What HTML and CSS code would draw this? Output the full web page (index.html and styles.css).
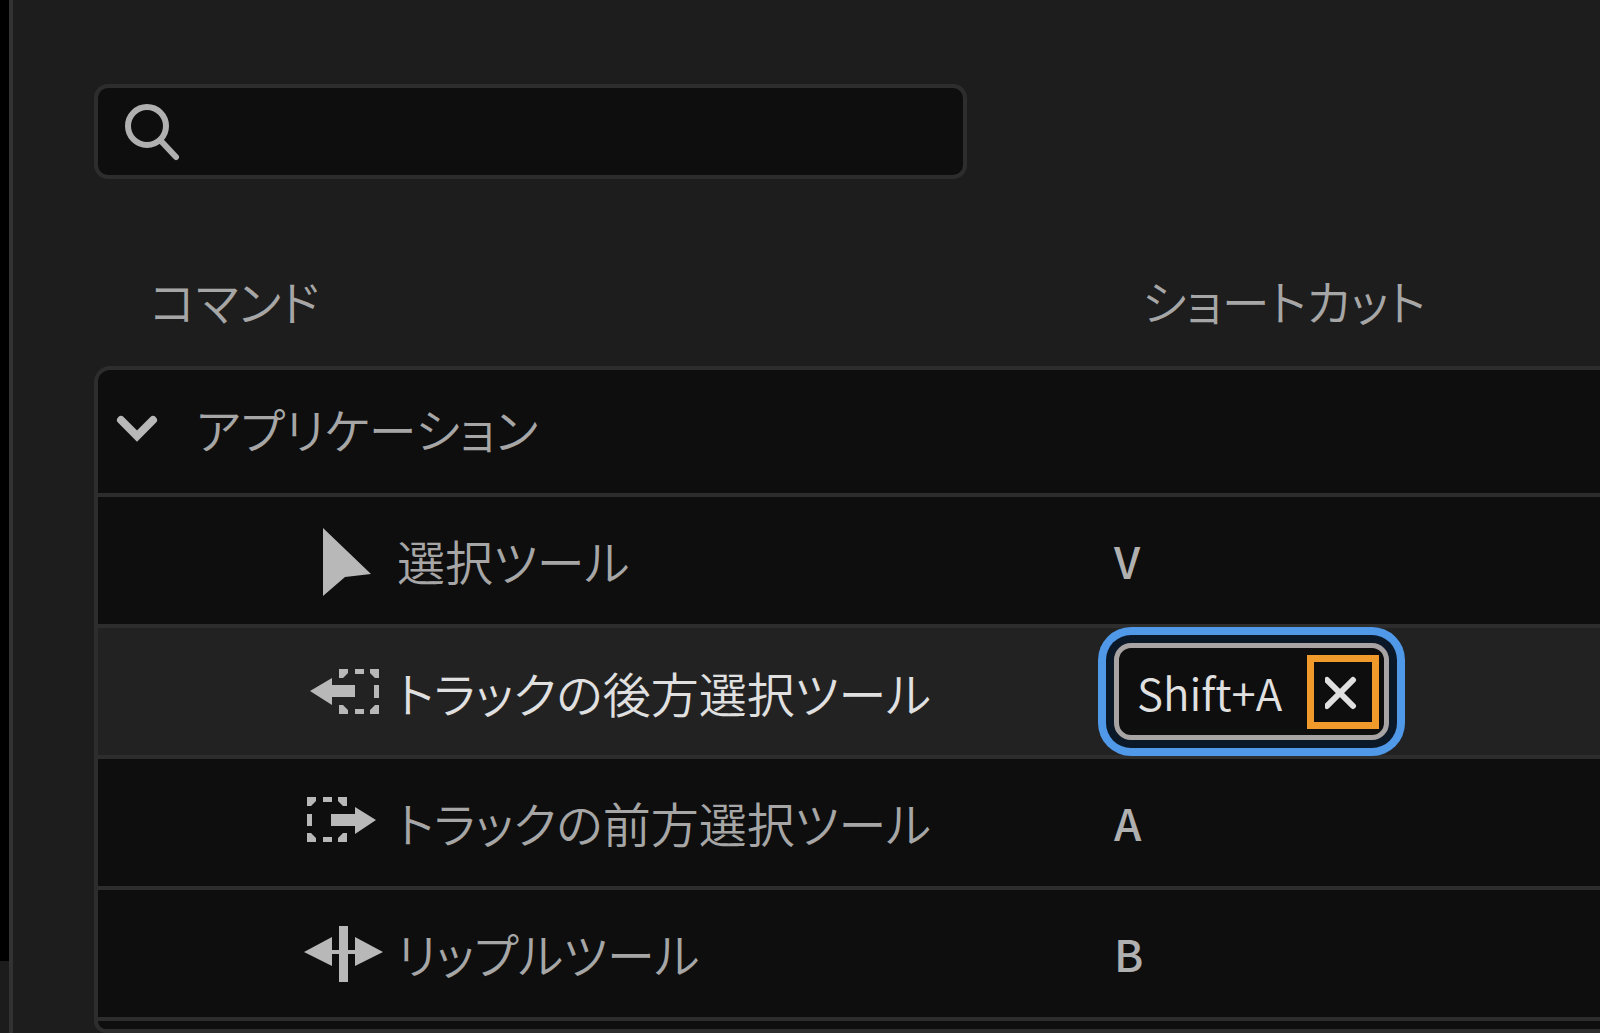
FILE: index.html
```html
<!DOCTYPE html>
<html lang="ja">
<head>
<meta charset="utf-8">
<meta name="viewport" content="width=device-width, initial-scale=1">
<title>キーボードショートカット</title>
<link rel="stylesheet" href="styles.css">
</head>
<body>
<div class="app">
  <div class="rail"></div>
  <main class="panel">
    <div class="search">
      <label class="search-label" for="search" aria-label="検索">
        <svg class="search-icon" viewBox="0 0 60 60" aria-hidden="true"><circle cx="24" cy="24" r="19"/><path d="M38 39 53 55"/></svg>
      </label>
      <input class="search-input" id="search" type="search">
    </div>
    <table class="commands">
      <colgroup><col class="col-command"><col></colgroup>
      <thead>
        <tr><th class="head-command" scope="col">コマンド</th><th class="head-shortcut" scope="col">ショートカット</th></tr>
      </thead>
      <tbody>
        <tr class="group">
          <td colspan="2">
            <button class="group-toggle" type="button" aria-expanded="true">
              <svg class="chevron" viewBox="0 0 44 32" aria-hidden="true"><path d="M5 8 21 24 37 8"/></svg>
              アプリケーション
            </button>
          </td>
        </tr>
        <tr>
          <td><div class="command">
            <svg class="tool" viewBox="0 0 80 72" aria-hidden="true"><path d="M19 4 67 50 41 53 19 72Z"/></svg>
            選択ツール
          </div></td>
          <td class="key">V</td>
        </tr>
        <tr class="selected">
          <td><div class="command">
            <svg class="tool" viewBox="0 0 80 72" aria-hidden="true"><path d="M6 35 28 22V29H51V41H28V49Z"/><path d="M35 13H44V17L39 22H35ZM51 13H60V18H51ZM66 13H75V22H71L66 17ZM70 29H75V42H70ZM75 58H66V54L71 49H75ZM51 53H60V58H51ZM35 49H39L44 54V58H35Z"/></svg>
            トラックの後方選択ツール
          </div></td>
          <td>
            <div class="chip">
              <input class="chip-input" type="text" value="Shift+A" aria-label="ショートカット">
              <button class="chip-clear" type="button" aria-label="削除"><svg class="cross" viewBox="0 0 36 36" aria-hidden="true"><path d="M2 6 28 32M28 6 2 32"/></svg></button>
            </div>
          </td>
        </tr>
        <tr>
          <td><div class="command">
            <svg class="tool" viewBox="0 0 80 72" aria-hidden="true"><path d="M72 34 51 21V28H27V40H51V48Z"/><path d="M3 11H12V15L7 20H3ZM19 11H28V16H19ZM34 11H43V20H39L34 15ZM3 28H8V40H3ZM3 47H7L12 52V56H3ZM19 51H28V56H19ZM43 56H34V52L39 47H43Z"/></svg>
            トラックの前方選択ツール
          </div></td>
          <td class="key">A</td>
        </tr>
        <tr>
          <td><div class="command">
            <svg class="tool" viewBox="0 0 80 72" aria-hidden="true"><path d="M0 35 28 20V33H35V9H44V33H51V20L79 35 51 49V37H44V65H35V37H28V49Z"/></svg>
            リップルツール
          </div></td>
          <td class="key">B</td>
        </tr>
        <tr class="end"><td colspan="2"></td></tr>
      </tbody>
    </table>
  </main>
</div>
</body>
</html>
```
FILE: styles.css
```css
:root {
  --line: #2d2d2d;
  --panel: #1d1d1d;
  --well: #0e0e0e;
  --text: #a6a6a6;
  --bright: #e0e0e0;
}

* { box-sizing: border-box; }

body {
  margin: 0;
  background: var(--panel);
  color: var(--text);
  font: 350 48px/64px "Noto Sans CJK JP", sans-serif;
  font-feature-settings: "palt";
}

.app {
  display: flex;
  min-height: 100vh;
}

.rail {
  width: 13px;
  background: linear-gradient(to top, #1c1c1c 72px, #000 72px);
  border-right: 4px solid #323232;
}

.panel {
  flex: 1;
  min-width: 0;
  padding: 84px 0 0 81px;
}

.search {
  display: flex;
  align-items: center;
  width: 58%;
  height: 95px;
  padding: 0 25px;
  background: var(--well);
  border: 4px solid var(--line);
  border-radius: 14px;
}

.search-label { display: flex; }

.search-icon {
  width: 60px;
  height: 60px;
  fill: none;
  stroke: #b0b0b0;
  stroke-width: 6;
  stroke-linecap: round;
}

.search-input {
  flex: 1;
  min-width: 0;
  border: 0;
  outline: 0;
  background: none;
  color: var(--bright);
  font: inherit;
}

.commands {
  width: 100%;
  table-layout: fixed;
  border-spacing: 0;
}

.col-command { width: 1020px; }

th {
  height: 187px;
  padding: 54px 0 0;
  font-weight: 350;
  text-align: left;
}

.head-command { padding-left: 56px; }
.head-shortcut { padding-left: 28px; }

td {
  height: 131px;
  padding: 0 0 2px;
  background: var(--well);
  border-bottom: 4px solid var(--line);
}

td:first-child { border-left: 4px solid var(--line); }

.group td {
  padding-bottom: 8px;
  border-top: 4px solid var(--line);
  border-top-left-radius: 16px;
}

.group-toggle {
  display: flex;
  align-items: center;
  gap: 36px;
  padding: 0 0 0 18px;
  border: 0;
  background: none;
  color: inherit;
  font: inherit;
  font-feature-settings: inherit;
}

.chevron {
  width: 44px;
  height: 32px;
  fill: none;
  stroke: #b8b8b8;
  stroke-width: 8;
  stroke-linecap: round;
}

.command {
  display: flex;
  align-items: center;
  gap: 13px;
  padding-left: 206px;
}

.tool {
  width: 80px;
  height: 72px;
  fill: #b8b8b8;
}

.key {
  color: #b0b0b0;
  font-size: 44px;
  font-weight: 500;
}

.selected td {
  padding: 0;
  background: #222;
}

.selected .command { color: var(--bright); }

.chip {
  display: flex;
  align-items: center;
  width: 275px;
  height: 97px;
  padding: 0 5px 0 18px;
  background: var(--well);
  border: 5px solid #a8a4a4;
  border-radius: 17px;
  box-shadow: 0 0 0 8px #0b1828, 0 0 0 16px #5098e8;
}

.chip-input {
  flex: 1;
  min-width: 0;
  padding: 0;
  border: 0;
  outline: 0;
  background: none;
  color: var(--bright);
  font: inherit;
  font-size: 44px;
}

.chip-clear {
  display: flex;
  align-items: center;
  justify-content: center;
  width: 72px;
  height: 74px;
  padding: 0;
  background: none;
  border: 7px solid #f09a2c;
}

.cross {
  width: 36px;
  height: 36px;
  fill: none;
  stroke: var(--bright);
  stroke-width: 6;
  stroke-linecap: round;
}

.end td {
  height: 12px;
  border-bottom-left-radius: 16px;
}
```
